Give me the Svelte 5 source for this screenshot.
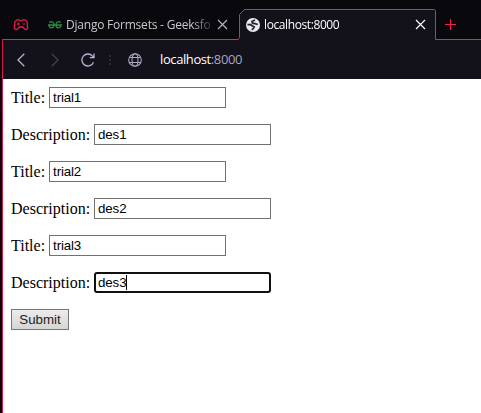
<script>
  const fields = [
    { label: 'Title', value: 'trial1' },
    { label: 'Description', value: 'des1' },
    { label: 'Title', value: 'trial2' },
    { label: 'Description', value: 'des2' },
    { label: 'Title', value: 'trial3' },
    { label: 'Description', value: 'des3', focused: true }
  ];
</script>

<div class="browser">
  <header class="tabs">
    <svg class="outline" width="481" height="40" viewBox="0 0 481 40">
      <path d="M240 40V14.5L244.500 9.500H435.500V40Z" fill="#13111a" />
      <path d="M2.500 40V39.500H238.500L239.500 37.500V14.500L244.500 9.500H434.500L435.500 10.500V39.500H481" fill="none" stroke="#fa1e4e" />
    </svg>
    <svg class="pad" width="16" height="12" viewBox="0 0 16 12" fill="none" stroke="#e71d4b" stroke-width="1.3">
      <path d="M4 .8H6L7 1.800H9L10 .8H12L14 2.500L14.700 9.300L13.300 10.700H12.300L9.700 8H6.300L3.700 10.700H2.700L1.300 9.300L2 2.500Z" />
      <path d="M4 5H7M5.500 3.500V6.500M9.500 5H12" stroke-width="1" />
    </svg>
    <div class="tab">
      <svg class="gfg" width="14" height="8" viewBox="0 0 14 8" fill="none" stroke="#2b8a42" stroke-width="1.300">
        <path d="M0 4H14M1.200 1.500C3 .1 6 .5 6 3.700C6 7.500 1.300 8 1 4M12.800 1.500C11 .1 8 .5 8 3.700C8 7.500 12.700 8 13 4" />
      </svg>
      <span class="title">Django Formsets - Geeksfo</span>
      <svg class="close" width="11" height="11" viewBox="0 0 11 11" stroke="#b8b7bb" stroke-width="1.100"><path d="M1 1L10 10M10 1L1 10" /></svg>
    </div>
    <div class="tab active">
      <svg width="14" height="14" viewBox="0 0 14 14">
        <circle cx="7" cy="7" r="7" fill="#e9e9ed" />
        <path d="M9 2L6 3.500L6.500 5.200L9 5.700L11.800 6.500M1.500 6.700H4.700L6.500 8L8.200 8.800L7.500 10.300L5.800 11.800" fill="none" stroke="#24222b" stroke-width="1.700" />
      </svg>
      <span class="title">localhost:8000</span>
      <svg class="close" width="11" height="11" viewBox="0 0 11 11" stroke="#fff" stroke-width="1.200"><path d="M1 1L10 10M10 1L1 10" /></svg>
    </div>
    <svg class="plus" width="11" height="11" viewBox="0 0 11 11" stroke="#fa1e4e"><path d="M0 5.500H11M5.500 0V11" /></svg>
  </header>
  <div class="body">
    <nav>
      <svg class="back" width="8" height="14" viewBox="0 0 8 14" fill="none" stroke="#b9b2d2" stroke-width="1.300"><path d="M7.300 .7L1 7L7.300 13.300" /></svg>
      <svg class="next" width="8" height="14" viewBox="0 0 8 14" fill="none" stroke="#45424f" stroke-width="1.300"><path d="M.7 .7L7 7L.7 13.300" /></svg>
      <svg class="reload" width="14" height="14" viewBox="0 0 14 14" fill="none" stroke="#b9b2d2" stroke-width="1.300"><path d="M12.500 9.200A6 6 0 1 1 11.500 3.100L12.700 4.500M13 .5V4.700H8.800" /></svg>
      <svg class="dots" width="2" height="10" viewBox="0 0 2 10" fill="#2b2935"><path d="M0 0H2V2H0ZM0 4H2V6H0ZM0 8H2V10H0Z" /></svg>
      <svg class="globe" width="14" height="14" viewBox="0 0 14 14" fill="none" stroke="#aca6c2" stroke-width="1.100"><circle cx="7" cy="7" r="6.300" /><ellipse cx="7" cy="7" rx="3" ry="6.300" /><path d="M1.500 4.500H12.500M1.500 9.500H12.500" /></svg>
      <span class="url">localhost<i>:8000</i></span>
    </nav>
    <main>
      {#each fields as f}
        <div class="row">
          <span>{f.label}:</span>
          <div class="input" class:focused={f.focused}>{f.value}{#if f.focused}<b></b>{/if}</div>
        </div>
      {/each}
      <button>Submit</button>
    </main>
  </div>
</div>

<style>
  .browser { width: 481px; height: 413px; overflow: hidden; background: #09080d; display: flex; flex-direction: column; font-family: "Open Sans", "Noto Sans", sans-serif; }
  svg { flex: none; display: block; }
  .tabs { height: 40px; position: relative; display: flex; box-sizing: border-box; padding: 10px 0 1px 13px; align-items: center; flex: none; }
  .tabs > *, .tab > * { position: relative; }
  .tabs .outline { position: absolute; left: 0; top: 0; }
  .tab { display: flex; align-items: center; height: 29px; margin-left: 19px; width: 181px; flex: none; }
  .title { font-size: 12px; line-height: 16px; color: #c8c8cb; white-space: nowrap; margin-left: 4px; width: 145px; letter-spacing: -0.22px; -webkit-mask-image: linear-gradient(90deg, #000 126px, transparent 150px); mask-image: linear-gradient(90deg, #000 126px, transparent 150px); }
  .tab .close { margin-left: 6px; }
  .active { margin-left: 17px; width: 182px; }
  .active .title { color: #fff; letter-spacing: -0.4px; }
  .plus { margin-left: 17px; }
  .body { flex: 1; margin-left: 2px; border-left: 1px solid #d51945; display: flex; flex-direction: column; }
  nav { height: 39px; background: #13111a; display: flex; align-items: center; padding-left: 14px; box-sizing: border-box; }
  .next { margin-left: 26px; }
  .reload { margin-left: 22px; }
  .dots { margin-left: 14px; }
  .globe { margin-left: 17px; }
  .url { margin-left: 18px; margin-bottom: 2px; font-size: 13px; line-height: 18px; color: #fff; letter-spacing: -0.4px; }
  .url i { font-style: normal; color: #aaa2c2; }
  main { flex: 1; background: #fff; padding: 8px; color: #000; font: 16px/18px "Liberation Serif", serif; }
  .row { height: 21px; display: flex; align-items: center; gap: 4px; margin-bottom: 16px; }
  .input { width: 177px; height: 21px; box-sizing: border-box; border: 1px solid #717171; padding: 0 3px; font: 13.333px/19px "Liberation Sans", sans-serif; letter-spacing: -0.15px; display: flex; align-items: center; }
  .input.focused { border: 2px solid #101010; border-radius: 3px; padding: 0 2px; }
  b { width: 1px; height: 15px; background: #000; }
  button { display: block; width: 58px; height: 21px; padding: 0; border: 1px solid #767676; border-radius: 0; background: linear-gradient(#ececec, #d5d5d5); color: #222; font: 13.333px/19px "Liberation Sans", sans-serif; }
</style>
